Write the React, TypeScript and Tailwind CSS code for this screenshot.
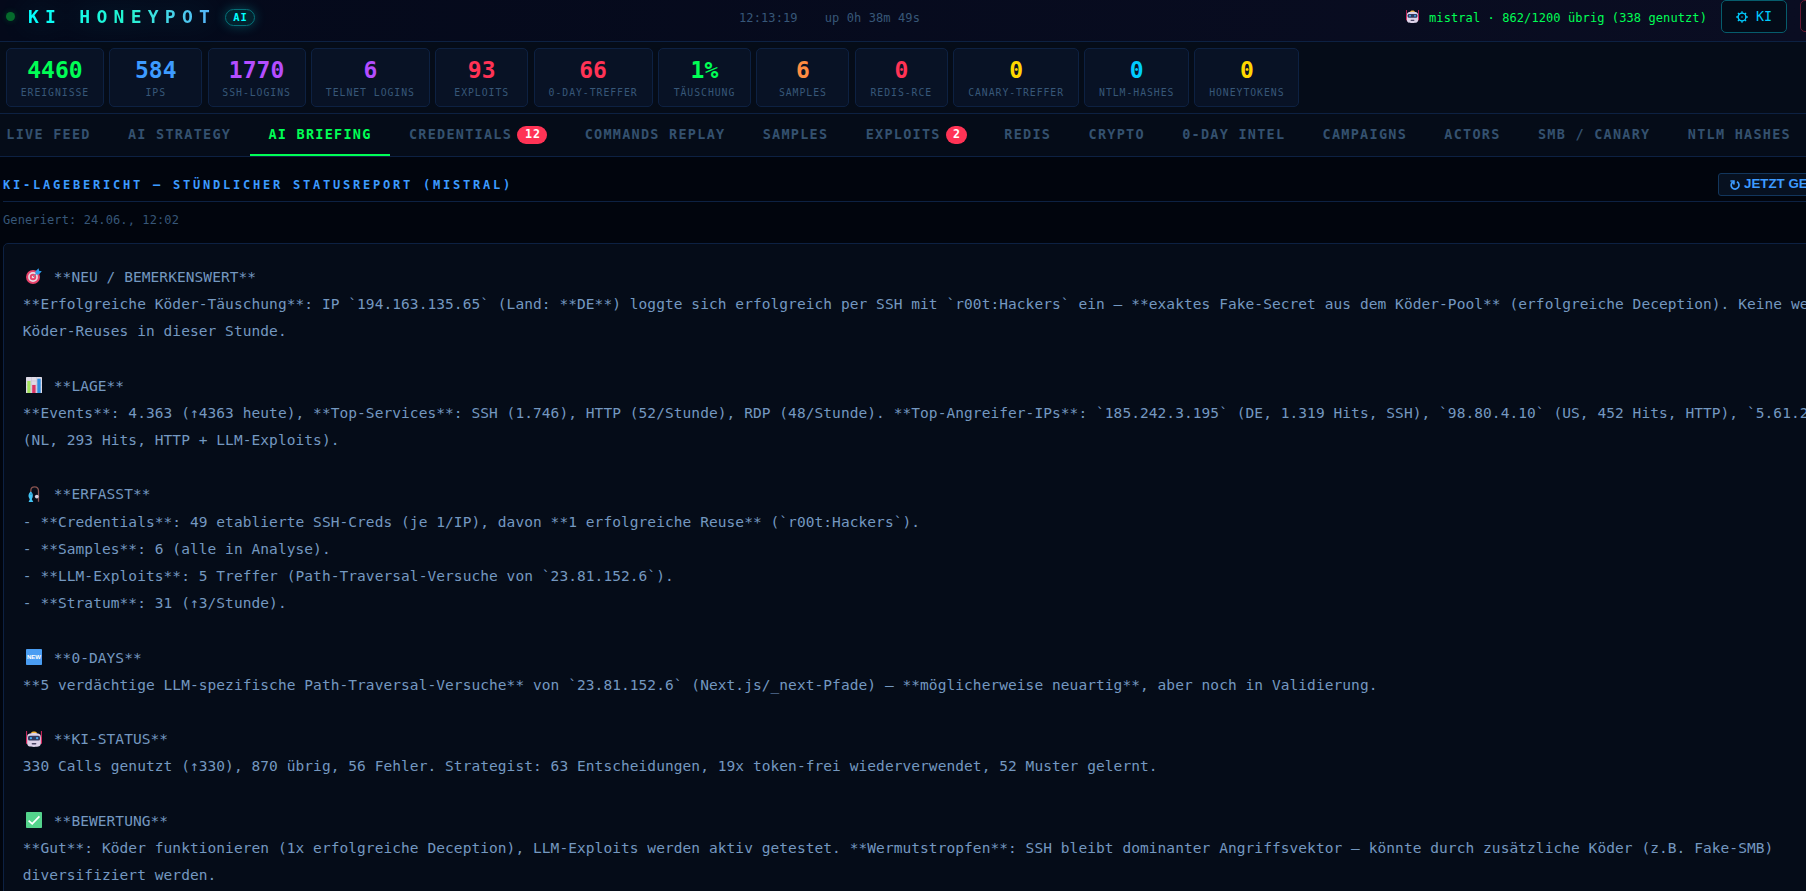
import type { ReactNode } from 'react'

type Glyph = 'target' | 'chart' | 'rod' | 'new' | 'robot' | 'check'

const MONO = "font-['DejaVu_Sans_Mono','Liberation_Mono',monospace]"

const stats = [
  { value: '4460', label: 'EREIGNISSE', color: 'text-[#00ff55]', width: 'w-[97.9px]' },
  { value: '584', label: 'IPS', color: 'text-[#3d9bff]', width: 'w-[93.1px]' },
  { value: '1770', label: 'SSH-LOGINS', color: 'text-[#b44dff]', width: 'w-[97.9px]' },
  { value: '6', label: 'TELNET LOGINS', color: 'text-[#b44dff]', width: 'w-[119px]' },
  { value: '93', label: 'EXPLOITS', color: 'text-[#ff3355]', width: 'w-[93.1px]' },
  { value: '66', label: '0-DAY-TREFFER', color: 'text-[#ff3355]', width: 'w-[119px]' },
  { value: '1%', label: 'TÄUSCHUNG', color: 'text-[#00ff55]', width: 'w-[93.1px]' },
  { value: '6', label: 'SAMPLES', color: 'text-[#ff8c42]', width: 'w-[93.1px]' },
  { value: '0', label: 'REDIS-RCE', color: 'text-[#ff3355]', width: 'w-[93.1px]' },
  { value: '0', label: 'CANARY-TREFFER', color: 'text-[#ffd700]', width: 'w-[125.8px]' },
  { value: '0', label: 'NTLM-HASHES', color: 'text-[#00ccff]', width: 'w-[104.8px]' },
  { value: '0', label: 'HONEYTOKENS', color: 'text-[#ffd700]', width: 'w-[104.8px]' },
]

const tabs: { label: string; badge?: string; active?: boolean }[] = [
  { label: 'LIVE FEED' },
  { label: 'AI STRATEGY' },
  { label: 'AI BRIEFING', active: true },
  { label: 'CREDENTIALS', badge: '12' },
  { label: 'COMMANDS REPLAY' },
  { label: 'SAMPLES' },
  { label: 'EXPLOITS', badge: '2' },
  { label: 'REDIS' },
  { label: 'CRYPTO' },
  { label: '0-DAY INTEL' },
  { label: 'CAMPAIGNS' },
  { label: 'ACTORS' },
  { label: 'SMB / CANARY' },
  { label: 'NTLM HASHES' },
]

const report: { glyph: Glyph; title: string; lines: string[] }[] = [
  {
    glyph: 'target',
    title: '**NEU / BEMERKENSWERT**',
    lines: [
      '**Erfolgreiche Köder-Täuschung**: IP `194.163.135.65` (Land: **DE**) loggte sich erfolgreich per SSH mit `r00t:Hackers` ein – **exaktes Fake-Secret aus dem Köder-Pool** (erfolgreiche Deception). Keine we',
      'Köder-Reuses in dieser Stunde.',
    ],
  },
  {
    glyph: 'chart',
    title: '**LAGE**',
    lines: [
      '**Events**: 4.363 (↑4363 heute), **Top-Services**: SSH (1.746), HTTP (52/Stunde), RDP (48/Stunde). **Top-Angreifer-IPs**: `185.242.3.195` (DE, 1.319 Hits, SSH), `98.80.4.10` (US, 452 Hits, HTTP), `5.61.2',
      '(NL, 293 Hits, HTTP + LLM-Exploits).',
    ],
  },
  {
    glyph: 'rod',
    title: '**ERFASST**',
    lines: [
      '- **Credentials**: 49 etablierte SSH-Creds (je 1/IP), davon **1 erfolgreiche Reuse** (`r00t:Hackers`).',
      '- **Samples**: 6 (alle in Analyse).',
      '- **LLM-Exploits**: 5 Treffer (Path-Traversal-Versuche von `23.81.152.6`).',
      '- **Stratum**: 31 (↑3/Stunde).',
    ],
  },
  {
    glyph: 'new',
    title: '**0-DAYS**',
    lines: [
      '**5 verdächtige LLM-spezifische Path-Traversal-Versuche** von `23.81.152.6` (Next.js/_next-Pfade) – **möglicherweise neuartig**, aber noch in Validierung.',
    ],
  },
  {
    glyph: 'robot',
    title: '**KI-STATUS**',
    lines: [
      '330 Calls genutzt (↑330), 870 übrig, 56 Fehler. Strategist: 63 Entscheidungen, 19x token-frei wiederverwendet, 52 Muster gelernt.',
    ],
  },
  {
    glyph: 'check',
    title: '**BEWERTUNG**',
    lines: [
      '**Gut**: Köder funktionieren (1x erfolgreiche Deception), LLM-Exploits werden aktiv getestet. **Wermutstropfen**: SSH bleibt dominanter Angriffsvektor – könnte durch zusätzliche Köder (z.B. Fake-SMB)',
      'diversifiziert werden.',
    ],
  },
]

const glyphs: Record<Glyph, ReactNode> = {
  target: (
    <>
      <circle cx="7" cy="9" r="7" fill="#e8436b" />
      <circle cx="7" cy="9" r="4.9" fill="#e9dce6" />
      <circle cx="7" cy="9" r="3.2" fill="#e8436b" />
      <circle cx="7" cy="9" r="1.3" fill="#f3d5df" />
      <path d="M7 9 12 4" stroke="#7c8fa8" strokeWidth="1" />
      <path d="M9.5 6.6V3.3L12.6.2l.5 2.500 2.700.6-3 3.200z" fill="#2e9bea" />
    </>
  ),
  chart: (
    <>
      <rect width="16" height="16" rx=".6" fill="#dfdbe6" />
      <path d="M0 4h16M0 8h16M0 12h16M5.5 0v16M10.5 0v16" stroke="#c5bfd0" strokeWidth=".5" />
      <rect x="1.3" y="4" width="3.2" height="12" fill="#a2e25c" />
      <rect x="6.2" y="8" width="3.4" height="8" fill="#dc3464" />
      <rect x="11.3" y="1.7" width="3.4" height="14.3" fill="#2f8fe0" />
    </>
  ),
  rod: (
    <>
      <path d="M4.8 7V5C4.8 2 6.2.8 8.6.8 11.4.8 12.5 2.6 12.5 5v10.8" fill="none" stroke="#8a5450" strokeWidth="1.3" />
      <path d="M4.8 5.6c2.4 1.7 2.7 4.7 1 7.6l1.5 2.8H2.6l1.2-2.8C1.7 10.5 2.4 7.2 4.8 5.6Z" fill="#42c4f4" />
      <circle cx="5" cy="8" r=".6" fill="#135174" />
      <circle cx="10.8" cy="10.6" r="1.9" fill="#d7cedd" />
    </>
  ),
  new: (
    <>
      <rect width="16" height="16" rx=".8" fill="#4a9df2" />
      <text
        x="8"
        y="10.2"
        textAnchor="middle"
        fill="#fff"
        fontFamily="Liberation Sans, sans-serif"
        fontSize="6"
        fontWeight="700"
      >
        NEW
      </text>
    </>
  ),
  robot: (
    <>
      <path d="M.6 0v9M15.4 0v9" stroke="#d82860" strokeWidth="1" />
      <rect x="0" y="6" width="2" height="7" rx="1" fill="#d82860" />
      <rect x="14" y="6" width="2" height="7" rx="1" fill="#d82860" />
      <path d="M4.8 2.6C5.2 1.2 6.4.6 8 .6s2.8.6 3.2 2z" fill="#f0b030" />
      <path d="M1.2 5.5C1.2 2.8 4 2 8 2s6.8.8 6.8 3.5v7c0 2.5-2 3.400-6.800 3.400s-6.800-.9-6.800-3.400z" fill="#ddd2e8" />
      <rect x="2" y="4.8" width="12" height="4.8" rx="1.6" fill="#30385c" />
      <circle cx="4.9" cy="7.1" r="1.2" fill="#42a8f0" />
      <circle cx="11.1" cy="7.1" r="1.2" fill="#42a8f0" />
      <rect x="5.600" y="11.900" width="4.800" height="1.600" rx=".8" fill="#4a4664" />
    </>
  ),
  check: (
    <>
      <rect width="16" height="16" rx=".8" fill="#54d38c" />
      <path d="m2.6 8.6 3.6 3.300 7.200-7.500" fill="none" stroke="#fff" strokeWidth="1.7" />
    </>
  ),
}

function Emoji({ name, className }: { name: Glyph; className: string }) {
  return (
    <svg viewBox="0 0 16 16" className={className} aria-hidden="true">
      {glyphs[name]}
    </svg>
  )
}

function GearIcon() {
  return (
    <svg viewBox="0 0 12 12" className="h-3 w-3" fill="none" stroke="currentColor" aria-hidden="true">
      <circle cx="6" cy="6" r="3.9" strokeWidth="1.4" />
      <path d="M6 .2v2M6 9.8v2M.2 6h2M9.8 6h2M1.9 1.9l1.300 1.300M8.800 8.800l1.300 1.300M1.900 10.100l1.300-1.300M8.800 3.200l1.300-1.300" strokeWidth="1.3" />
      <circle cx="6" cy="6" r=".7" fill="currentColor" stroke="none" />
    </svg>
  )
}

function Header() {
  return (
    <header className="flex h-[42px] items-start border-b border-[#0d2142] bg-linear-to-r from-[#04091a] to-[#0a0d22]">
      <div className="flex h-[33px] w-[739px] shrink-0 items-center">
        <span className="ml-1.5 h-[9px] w-[9px] rounded-full bg-[#066b2c] shadow-[0_0_6px_#00ff5530]" />
        <h1 className="ml-[13px] w-[197px] bg-linear-to-r from-[#00ffff] via-[#22f5d0] to-[#5ba8ff] bg-clip-text text-[18px] leading-[35px] font-bold tracking-[6.27px] whitespace-nowrap text-transparent drop-shadow-[0_0_14px_#00ffff40]">
          KI HONEYPOT
        </h1>
        <span className="mt-[2px] flex h-[17px] w-[30px] items-center justify-center rounded-full border border-[#067078] bg-[#03222e] pl-px text-[10.5px] font-bold tracking-[1px] text-[#00ffff] shadow-[0_0_12px_#00ffff40]">
          AI
        </span>
      </div>
      <div className="flex h-[33px] w-[666px] shrink-0 items-center gap-[27px] pt-[2px] text-[12px] tracking-[0.11px] text-[#375778]">
        <span>12:13:19</span>
        <span>up 0h 38m 49s</span>
      </div>
      <div className="flex h-[33px] w-[316px] shrink-0 items-center text-[12px] tracking-[0.09px] whitespace-nowrap text-[#00ff55]">
        <Emoji name="robot" className="mr-[10px] ml-px h-[13px] w-[13px]" />
        <span className="pt-[2px]">mistral · 862/1200 übrig (338 genutzt)</span>
      </div>
      <button className="flex h-[33px] w-[66px] shrink-0 items-center gap-[8px] rounded-[5px] border border-[#065c6c] bg-[#030b18] pl-[14px] text-[13.3px] tracking-[0.1px] text-[#00ccff]">
        <GearIcon />
        <span className="pt-px">KI</span>
      </button>
      <button className="ml-[13px] h-8 w-20 shrink-0 rounded-[5px] border border-[#671b34] bg-[#080a18]" aria-label="Stop" />
    </header>
  )
}

function StatsBar() {
  return (
    <section className="flex h-[72px] gap-[5.33px] border-b border-[#0d2142] bg-[#050c18] pt-1.5 pl-1.5">
      {stats.map(({ value, label, color, width }) => (
        <div
          key={label}
          className={`flex h-[59px] shrink-0 flex-col items-center rounded-[5px] border border-[#0d2142] bg-[#081225] pt-[8px] ${width}`}
        >
          <span className={`text-[23px] leading-[26px] font-bold tracking-[0.05px] ${color}`}>{value}</span>
          <span className="mt-[4px] text-[9.8px] leading-[12px] tracking-[0.95px] whitespace-nowrap text-[#375778]">
            {label}
          </span>
        </div>
      ))}
    </section>
  )
}

function TabBar() {
  return (
    <nav className="-ml-[12.4px] flex h-[43px] border-b border-[#0d2142] bg-[#050c18]">
      {tabs.map(({ label, badge, active }) => (
        <button
          key={label}
          className={`flex shrink-0 items-center border-b-2 px-[18.67px] pt-[1px] text-[13.5px] font-bold tracking-[1.25px] whitespace-nowrap ${
            active ? 'border-[#00ff55] text-[#00ff55]' : 'border-transparent text-[#34516f]'
          }`}
        >
          {label}
          {badge && (
            <span
              className={`ml-[5.33px] flex h-[18px] items-center justify-center rounded-full bg-[#ff3355] pl-px text-[11.67px] tracking-[0.9px] text-white ${
                badge.length > 1 ? 'w-[30px]' : 'w-[21px]'
              }`}
            >
              {badge}
            </span>
          )}
        </button>
      ))}
    </nav>
  )
}

function Briefing() {
  return (
    <main className="w-[1840px] pl-[3px]">
      <div className="flex h-[45px] items-start border-b border-[#0d2142] pt-4">
        <h2 className="w-[1715px] shrink-0 text-[12px] leading-[24px] font-bold tracking-[2.775px] text-[#3d9bff]">
          KI-LAGEBERICHT — STÜNDLICHER STATUSREPORT (MISTRAL)
        </h2>
        <button className="flex h-[23px] w-[160px] shrink-0 items-center gap-1 rounded-[3px] border border-[#12365c] bg-[#071120] pl-[11px] font-['Liberation_Sans',sans-serif] text-[13.33px] leading-5 font-bold whitespace-nowrap text-[#3d9bff]">
          <svg viewBox="0 0 10 10" className="h-[10px] w-[10px]" fill="none" stroke="currentColor" strokeWidth="1.7" aria-hidden="true">
            <path d="M7 1.8a3.9 3.9 0 1 1-4.200.2" />
            <path d="M.4 1h3.5v3.4" />
          </svg>
          <span className="-mt-px">JETZT GENERIEREN</span>
        </button>
      </div>
      <p className="mt-[9px] text-[12px] leading-[18px] tracking-[0.11px] text-[#375778]">Generiert: 24.06., 12:02</p>
      <article className="mt-[14px] h-[660px] rounded-[5px] border border-[#0d2142] bg-[#050c18] px-[18.8px] pt-[19.8px] text-[14.5px] leading-[27.2px] tracking-[0.067px] text-[#7498c0]">
        {report.map(({ glyph, title, lines }) => (
          <section key={title} className="mb-[27.2px]">
            <h3 className="flex items-center">
              <Emoji name={glyph} className="-mt-[2px] mr-[12px] ml-[3px] h-4 w-4" />
              {title}
            </h3>
            {lines.map((line) => (
              <p key={line} className="whitespace-pre">
                {line}
              </p>
            ))}
          </section>
        ))}
      </article>
    </main>
  )
}

export default function App() {
  return (
    <div className={`h-[891px] w-[1806px] overflow-hidden bg-[#01050d] ${MONO}`}>
      <Header />
      <StatsBar />
      <TabBar />
      <Briefing />
    </div>
  )
}
